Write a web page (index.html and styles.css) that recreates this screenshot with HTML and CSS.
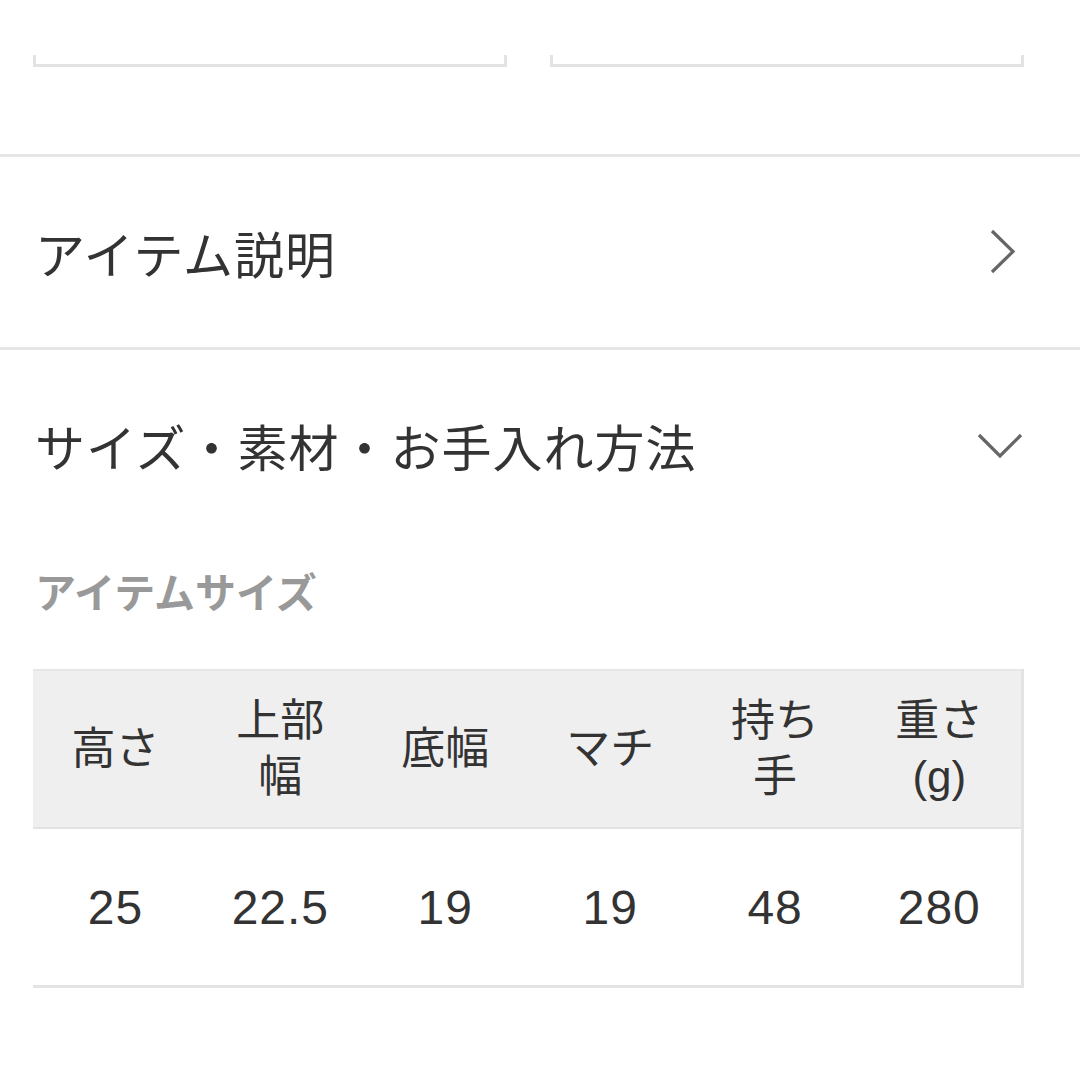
FILE: index.html
```html
<!DOCTYPE html>
<html lang="ja">
<head>
<meta charset="utf-8">
<title>サイズ・素材・お手入れ方法</title>
<link rel="stylesheet" href="styles.css">
</head>
<body>
<div class="page">
  <div class="fields">
    <div class="field"></div>
    <div class="field"></div>
  </div>

  <div class="row">
    <span class="row-title">アイテム説明</span>
    <svg class="chev" width="40" height="48" viewBox="0 0 40 48"><path d="M8 3 L29 23.5 L8 44" fill="none" stroke="#666" stroke-width="3.2"/></svg>
  </div>

  <div class="section">
    <div class="row">
      <span class="row-title">サイズ・素材・お手入れ方法</span>
      <svg class="chev" width="48" height="30" viewBox="0 0 48 30"><path d="M3 5 L24 26 L45 5" fill="none" stroke="#666" stroke-width="3.2"/></svg>
    </div>
    <div class="body">
      <div class="sub">アイテムサイズ</div>
      <table class="size">
        <thead>
          <tr><th>高さ</th><th>上部幅</th><th>底幅</th><th>マチ</th><th>持ち手</th><th>重さ(g)</th></tr>
        </thead>
        <tbody>
          <tr><td>25</td><td>22.5</td><td>19</td><td>19</td><td>48</td><td>280</td></tr>
        </tbody>
      </table>
    </div>
  </div>
</div>
</body>
</html>
```
FILE: styles.css
```css
html, body {
  margin: 0;
  padding: 0;
  background: #ffffff;
}
body {
  font-family: "Liberation Sans", "Noto Sans CJK JP", sans-serif;
  color: #333333;
}
.page {
  width: 1080px;
}
.fields {
  display: flex;
  gap: 43px;
  padding: 55px 56px 0 33px;
  height: 157px;
  box-sizing: border-box;
  border-bottom: 3px solid #e6e6e6;
}
.field {
  flex: 1;
  height: 9px;
  border: 3px solid #e3e3e3;
  border-top: none;
}
.row {
  display: flex;
  align-items: center;
  justify-content: space-between;
  height: 190px;
  padding: 0 56px 0 35px;
}
.row-title {
  font-family: "Noto Sans CJK JP", sans-serif;
  font-size: 50px;
  line-height: 1;
  letter-spacing: 1px;
  color: #333333;
}
.section {
  border-top: 3px solid #e6e6e6;
}
.section .row {
  height: 190px;
  padding-right: 56px;
}
.body {
  padding: 25px 56px 0 33px;
}
.sub {
  font-family: "Noto Sans CJK JP", sans-serif;
  font-weight: 700;
  font-size: 41px;
  line-height: 50px;
  color: #999999;
  padding-left: 2px;
  margin-bottom: 54px;
}
.size {
  width: 991px;
  table-layout: fixed;
  border-collapse: collapse;
  border-top: 2px solid #e6e6e6;
  border-right: 3px solid #e3e3e3;
  border-bottom: 3px solid #e3e3e3;
}
.size th {
  background: #efefef;
  height: 156px;
  padding: 0 24px;
  font-weight: 400;
  font-size: 44px;
  line-height: 56px;
  color: #333333;
  border-bottom: 2px solid #e3e3e3;
  text-align: center;
  vertical-align: middle;
}
.size td {
  height: 156px;
  padding: 0;
  font-size: 48px;
  letter-spacing: 1px;
  color: #333333;
  text-align: center;
  vertical-align: middle;
}
```
